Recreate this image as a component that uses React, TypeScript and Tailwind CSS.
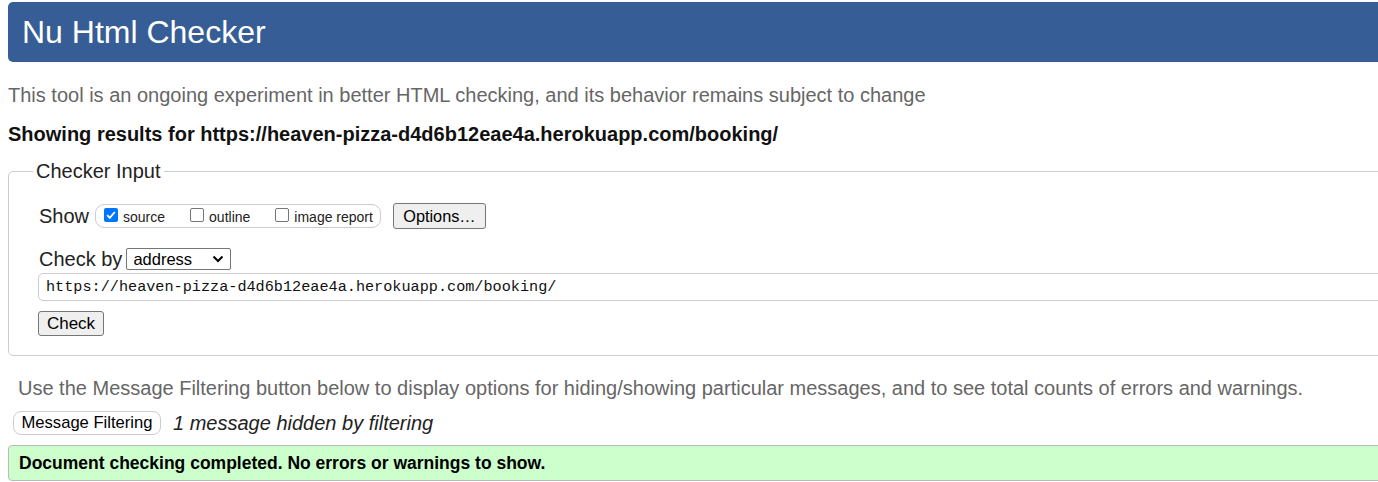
import React from "react";

function Box({ checked }: { checked?: boolean }) {
  if (checked) {
    return (
      <span className="inline-flex w-[14px] h-[14px] -mt-[3px] rounded-[2px] bg-[#0075ff] items-center justify-center">
        <svg width="12" height="12" viewBox="0 0 12 12">
          <path d="M2.2 6.2 L4.8 8.8 L9.8 3" fill="none" stroke="white" strokeWidth="1.9" />
        </svg>
      </span>
    );
  }
  return <span className="inline-block w-[14px] h-[14px] -mt-[3px] rounded-[2px] border border-[#767676] bg-white" />;
}

export default function App() {
  return (
    <div className="w-full overflow-hidden bg-white" style={{ fontFamily: '"Liberation Sans", Arial, sans-serif' }}>
      <div className="w-[1420px] pl-2 pt-[2px]">
        <div className="h-[60px] bg-[#365d95] rounded-[5px] flex items-center pl-[14px]">
          <h1 className="text-white text-[32px] leading-none">Nu Html Checker</h1>
        </div>
        <p className="mt-[21px] text-[#666] text-[20px] leading-[24px]">
          This tool is an ongoing experiment in better HTML checking, and its behavior remains subject to change
        </p>
        <p className="mt-[15px] text-[#111] font-bold text-[20px] leading-[24px]">
          Showing results for https://heaven-pizza-d4d6b12eae4a.herokuapp.com/booking/
        </p>
        <fieldset className="mt-[14px] border border-[#ccc] rounded-[5px] pb-[19px]">
          <legend className="ml-[24px] px-[3px] text-[20px] leading-[22px] text-[#222]">Checker Input</legend>
          <div className="pl-[30px]">
            <div className="flex items-center h-[26px] mt-[21px]">
              <span className="text-[20px] text-[#222] mr-[6px]">Show</span>
              <div className="flex items-center h-[24px] border border-[#ccc] rounded-[9px] pl-[8px] pr-[7px] text-[14px] text-[#222]">
                <Box checked />
                <span className="ml-[5px] mr-[25px] mt-[3px]">source</span>
                <Box />
                <span className="ml-[5px] mr-[25px] mt-[3px]">outline</span>
                <Box />
                <span className="ml-[5px] mt-[3px]">image report</span>
              </div>
              <div className="ml-[12px] h-[26px] w-[93px] flex items-center justify-center bg-[#efefef] border border-[#767676] rounded-[3px] text-[16.3px] text-black">
                Options…
              </div>
            </div>
            <div className="flex items-center h-[22px] mt-[19px]">
              <span className="text-[20px] text-[#222] mr-[4px]">Check by</span>
              <div className="h-[22px] w-[105px] border border-[#767676] rounded-[2px] flex items-center pl-[6px] pr-[6px] justify-between text-[16.5px] text-black">
                <span>address</span>
                <svg width="12" height="8" viewBox="0 0 12 8">
                  <path d="M1.5 1.5 L6 6 L10.5 1.5" fill="none" stroke="black" strokeWidth="2" />
                </svg>
              </div>
            </div>
            <div className="mt-[3px] -ml-[1px] h-[28px] border border-[#ccc] rounded-[5px] flex items-center pl-[7px] text-[15.2px] text-[#111]" style={{ fontFamily: '"Liberation Mono", "DejaVu Sans Mono", monospace' }}>
              https://heaven-pizza-d4d6b12eae4a.herokuapp.com/booking/
            </div>
            <div className="mt-[10px] -ml-[1px] h-[25px] w-[66px] flex items-center justify-center bg-[#efefef] border border-[#767676] rounded-[3px] text-[17px] text-black">
              Check
            </div>
          </div>
        </fieldset>
        <p className="mt-[20px] ml-[10px] text-[#666] text-[20px] leading-[24px]">
          Use the Message Filtering button below to display options for hiding/showing particular messages, and to see total counts of errors and warnings.
        </p>
        <div className="flex items-center h-[24px] mt-[11px] ml-[5px]">
          <div className="h-[24px] w-[148px] flex items-center justify-center bg-white border border-[#ccc] rounded-[8px] text-[16.6px] text-black">
            Message Filtering
          </div>
          <span className="ml-[12px] italic text-[20px] leading-none text-[#222]">1 message hidden by filtering</span>
        </div>
        <div className="mt-[10px] h-[36px] bg-[#ccffcc] border border-[#bbb] rounded-[4px] flex items-center pl-[10px] font-bold text-[17.5px] text-black">
          Document checking completed. No errors or warnings to show.
        </div>
      </div>
    </div>
  );
}
